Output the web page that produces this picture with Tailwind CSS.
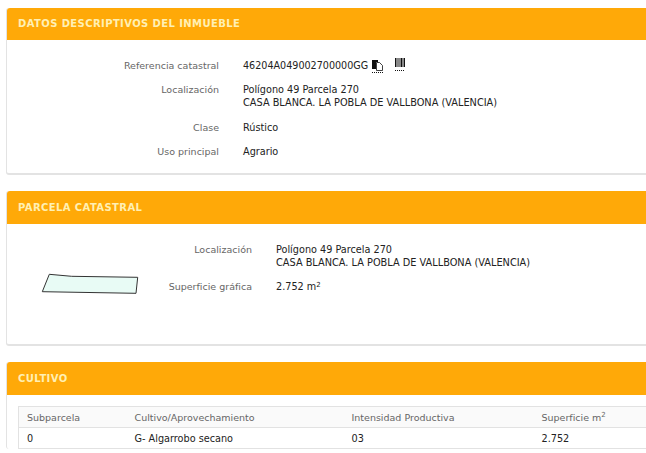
<!DOCTYPE html>
<html lang="es">
<head>
  <meta charset="UTF-8">
  <title>Sede Catastro</title>
  <script src="https://cdn.jsdelivr.net/npm/@tailwindcss/browser@4"></script>
</head>
<body class="bg-white h-[453px] overflow-hidden font-['DejaVu_Sans',sans-serif] text-[9.7px] leading-[13px] text-[#222]">
  <div class="w-[680px] pl-[6px] pt-[8px]">

    <!-- Datos descriptivos -->
    <section class="bg-white rounded-[3px] border-b-2 border-l border-[#e3e3e3] h-[167px]">
      <div class="bg-[#ffa908] h-[32px] rounded-t-[3px] pl-[11px] pb-[1px] flex items-center font-bold text-[#fff0b4] text-[10px] tracking-[0.4px]">DATOS DESCRIPTIVOS DEL INMUEBLE</div>
      <div class="pt-[19px] flex flex-col">
        <div class="flex h-[13px] mb-[11px]">
          <div class="w-[212px] text-right text-[#666] text-[9.5px]">Referencia catastral</div>
          <div class="pl-[24px] flex">
            <span class="text-[9.6px]">46204A049002700000GG</span>
            <svg class="ml-[4px]" width="11" height="14" viewBox="0 0 11 14">
              <path d="M0 1h6v2H4v7H0z" fill="#111"/>
              <path d="M4.5 3.5h3l3 3v5h-6z" fill="#fff" stroke="#111" stroke-width="0.8"/>
              <path d="M0 13.500h11" stroke="#111" stroke-dasharray="1 1"/>
            </svg>
            <svg class="ml-[12px] mt-[-1px] shrink-0" width="10" height="14" viewBox="0 0 10 14">
              <path d="M0 0h1.500v9H0zM2.500 0h1v9h-1zM4.500 0h1v9h-1zM6 0h1.500v9H6zM8.500 0h1.500v9H8.500z" fill="#111"/>
              <path d="M0 12.500h10" stroke="#111" stroke-dasharray="1 1"/>
            </svg>
          </div>
        </div>
        <div class="flex mb-[12px]">
          <div class="w-[212px] text-right text-[#666] text-[9.5px]">Localización</div>
          <div class="pl-[24px]">Polígono 49 Parcela 270<br><span class="text-[9.77px]">CASA BLANCA. LA POBLA DE VALLBONA (VALENCIA)</span></div>
        </div>
        <div class="flex mb-[11px]">
          <div class="w-[212px] text-right text-[#666] text-[9.5px]">Clase</div>
          <div class="pl-[24px]">Rústico</div>
        </div>
        <div class="flex">
          <div class="w-[212px] text-right text-[#666] text-[9.5px]">Uso principal</div>
          <div class="pl-[24px]">Agrario</div>
        </div>
      </div>
    </section>

    <!-- Parcela catastral -->
    <section class="mt-[16px] bg-white rounded-[3px] border-b-2 border-l border-[#e3e3e3] h-[155px]">
      <div class="bg-[#ffa908] h-[33px] rounded-t-[3px] pl-[11px] pb-[1px] flex items-center font-bold text-[#fff0b4] text-[10px] tracking-[0.4px]">PARCELA CATASTRAL</div>
      <div class="flex pt-[19px]">
        <div class="w-[132px] pl-[34px] pt-[30px]">
          <svg width="98" height="22" viewBox="41 273 98 22">
            <polygon points="49.3,274.3 71.7,276.3 137.700,277.300 136,293.300 100,292.700 42.300,291.700" fill="#e8fbf5" stroke="#333" stroke-width="1"/>
          </svg>
        </div>
        <div class="flex-1">
          <div class="flex mb-[11px]">
            <div class="w-[113px] text-right text-[#666] text-[9.5px]">Localización</div>
            <div class="pl-[24px]">Polígono 49 Parcela 270<br><span class="text-[9.77px]">CASA BLANCA. LA POBLA DE VALLBONA (VALENCIA)</span></div>
          </div>
          <div class="flex">
            <div class="w-[113px] text-right text-[#666] text-[9.5px]">Superficie gráfica</div>
            <div class="pl-[24px]">2.752 m<sup class="text-[7px] leading-[0]">2</sup></div>
          </div>
        </div>
      </div>
    </section>

    <!-- Cultivo -->
    <section class="mt-[16px] bg-white rounded-[3px] border-l border-[#e3e3e3]">
      <div class="bg-[#ffa908] h-[33px] rounded-t-[3px] pl-[11px] pb-[1px] flex items-center font-bold text-[#fff0b4] text-[10px] tracking-[0.4px]">CULTIVO</div>
      <div class="pt-[11px] pl-[11px]">
        <table class="w-[660px] table-fixed border border-[#e2e2e2] border-collapse">
          <thead>
            <tr class="bg-[#fafafa] h-[21px] text-left text-[#666] text-[9.5px] border-b border-[#e2e2e2]">
              <th class="w-[116px] pl-[8px] font-normal">Subparcela</th>
              <th class="w-[217px] font-normal">Cultivo/Aprovechamiento</th>
              <th class="w-[190px] font-normal">Intensidad Productiva</th>
              <th class="font-normal">Superficie m<sup class="text-[7px] leading-[0]">2</sup></th>
            </tr>
          </thead>
          <tbody>
            <tr class="h-[21px]">
              <td class="pl-[8px]">0</td>
              <td>G- Algarrobo secano</td>
              <td>03</td>
              <td>2.752</td>
            </tr>
          </tbody>
        </table>
      </div>
    </section>
  </div>
</body>
</html>
